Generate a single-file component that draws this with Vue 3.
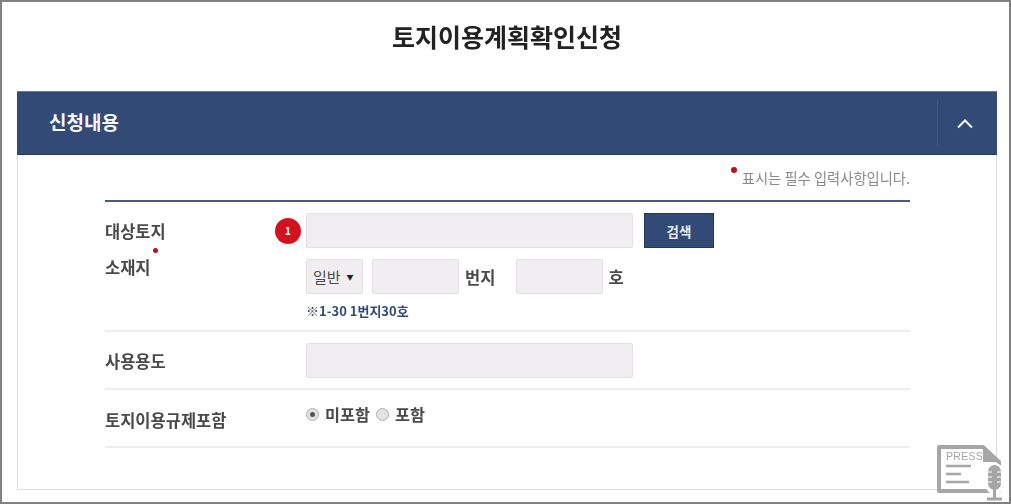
<template>
  <div class="frame">
    <h1 class="page-title">토지이용계획확인신청</h1>

    <section class="panel">
      <header class="panel-head">
        <h2 class="panel-title">신청내용</h2>
        <button class="toggle" type="button" aria-label="접기">
          <svg width="18" height="11" viewBox="0 0 18 11">
            <path d="M2 9.5 L9 2.5 L16 9.5" fill="none" stroke="#f4f6fa" stroke-width="2" />
          </svg>
        </button>
      </header>

      <div class="panel-body">
        <p class="required-note"><span class="dot note-dot"></span>표시는 필수 입력사항입니다.</p>

        <div class="form">
          <div class="row row-land">
            <div class="labels">
              <div class="label">대상토지</div>
              <div class="label label-req">소재지<span class="dot req-dot"></span></div>
            </div>
            <div class="fields">
              <div class="line">
                <span class="badge">1</span>
                <input class="input input-wide" type="text" />
                <button class="search" type="button">검색</button>
              </div>
              <div class="line line-addr">
                <div class="select">일반<span class="caret">▼</span></div>
                <input class="input input-num" type="text" />
                <span class="unit unit-bunji">번지</span>
                <input class="input input-num" type="text" />
                <span class="unit unit-ho">호</span>
              </div>
              <div class="hint">※1-30 1번지30호</div>
            </div>
          </div>

          <div class="row row-use">
            <div class="label">사용용도</div>
            <input class="input input-wide" type="text" />
          </div>

          <div class="row row-rule">
            <div class="label">토지이용규제포함</div>
            <div class="radios">
              <span v-for="opt in options" :key="opt.text" class="radio-item">
                <span class="radio" :class="{ on: opt.checked }"></span>{{ opt.text }}
              </span>
            </div>
          </div>
        </div>
      </div>
    </section>

    <svg class="press" width="68" height="57" viewBox="0 0 68 57">
      <path d="M2 2 H46 L62 17 V46 H2 Z" fill="#fff" stroke="#a6a6a6" stroke-width="4" stroke-linejoin="round" />
      <path d="M46 1 L63 17 H46 Z" fill="#a6a6a6" />
      <text x="9" y="15" class="press-text">PRESS</text>
      <path d="M9 21 H34 M9 29 H24 M9 37 H32" stroke="#a6a6a6" stroke-width="2.5" fill="none" />
      <rect x="49" y="18" width="17" height="31" rx="8" fill="#fff" />
      <rect x="51" y="20" width="13" height="25" rx="6.5" fill="#a6a6a6" />
      <path d="M51 27 H55 M51 32 H55 M51 37 H55 M60 27 H64 M60 32 H64 M60 37 H64" stroke="#fff" stroke-width="1.2" />
      <path d="M57.5 45 V53 M50 54 H65" stroke="#a6a6a6" stroke-width="3" fill="none" />
    </svg>
  </div>
</template>

<script setup>
const options = [
  { text: '미포함', checked: true },
  { text: '포함', checked: false }
]
</script>

<style>
html,
body {
  margin: 0;
  background: #fff;
}
</style>

<style scoped>
.frame {
  position: relative;
  box-sizing: border-box;
  width: 1011px;
  height: 504px;
  border: 2px solid #808080;
  padding: 18px 12px 12px 15px;
  background: #fff;
  overflow: hidden;
  font-family: "Noto Sans CJK KR", "Liberation Sans", sans-serif;
  color: #3c3c3c;
}

.page-title {
  margin: 0 0 38px;
  height: 33px;
  line-height: 33px;
  text-align: center;
  font-size: 25px;
  font-weight: 700;
  color: #222;
  filter: blur(0.5px);
}

.panel {
  height: 399px;
  box-sizing: border-box;
  border: 1px solid #dcdcdc;
  border-top: 0;
  filter: blur(0.5px);
}

.panel-head {
  display: flex;
  align-items: center;
  justify-content: space-between;
  height: 64px;
  margin: 0 -1px;
  background: #324a76;
  border-top: 1px solid #6b7b9c;
  border-bottom: 1px solid #27375a;
  box-sizing: border-box;
}

.panel-title {
  margin: -3px 0 0 32px;
  font-size: 19px;
  font-weight: 700;
  color: #f4f6fa;
}

.toggle {
  display: flex;
  align-items: center;
  justify-content: center;
  width: 60px;
  height: 46px;
  padding: 0 5px 0 0;
  border: 0;
  border-left: 1px solid #3d5582;
  background: none;
}

.panel-body {
  padding: 0 86px 0 87px;
}

.required-note {
  position: relative;
  margin: 0;
  height: 45px;
  line-height: 46px;
  text-align: right;
  font-size: 14.3px;
  color: #8a8a8a;
}

.dot {
  position: absolute;
  width: 6px;
  height: 6px;
  border-radius: 50%;
  background: #b5121b;
}

.note-dot {
  right: 173px;
  top: 12px;
}

.form {
  border-top: 2px solid #4a5a85;
}

.row {
  display: flex;
  border-bottom: 2px solid #eeeef2;
  box-sizing: border-box;
}

.row-land {
  height: 130px;
  padding-top: 11px;
}

.row-use {
  height: 58px;
  padding-top: 11px;
  align-items: flex-start;
}

.row-rule {
  height: 58px;
  padding-top: 13px;
}

.labels {
  width: 201px;
  flex: none;
}

.label {
  position: relative;
  width: 201px;
  flex: none;
  font-size: 16.5px;
  font-weight: 700;
  line-height: 36px;
  color: #4a4a4a;
}

.row-rule .label {
  line-height: 34px;
}

.label-req {
  width: max-content;
}

.req-dot {
  width: 5px;
  height: 5px;
  right: -7px;
  top: -1px;
}

.line {
  position: relative;
  display: flex;
  align-items: center;
}

.badge {
  position: absolute;
  left: -31px;
  top: 5px;
  width: 26px;
  height: 26px;
  border-radius: 50%;
  background: #d3121f;
  color: #fff;
  font-size: 10px;
  font-weight: 700;
  line-height: 26px;
  text-align: center;
}

.input {
  box-sizing: border-box;
  height: 35px;
  border: 1px solid #e4e0e2;
  border-radius: 2px;
  background: #f1eef1;
  padding: 0;
  outline: none;
}

.input-wide {
  width: 327px;
}

.input-num {
  width: 87px;
}

.search {
  width: 70px;
  height: 35px;
  margin-left: 11px;
  padding: 0;
  border: 1px solid #27375a;
  background: #324a76;
  color: #e4e8f0;
  font-family: inherit;
  font-size: 13.5px;
  font-weight: 700;
}

.line-addr {
  margin-top: 11px;
}

.select {
  box-sizing: border-box;
  display: flex;
  align-items: center;
  width: 57px;
  height: 35px;
  margin-right: 9px;
  padding-left: 6px;
  border: 1px solid #e4e0e2;
  border-radius: 2px;
  background: #f1eef1;
  font-size: 15px;
  color: #4a4a4a;
}

.caret {
  margin-left: 6px;
  font-size: 7px;
  color: #222;
}

.unit {
  font-size: 16.5px;
  font-weight: 700;
  color: #4a4a4a;
}

.unit-bunji {
  margin: 0 21px 0 6px;
}

.unit-ho {
  margin-left: 5px;
}

.hint {
  margin-top: 8px;
  font-size: 13px;
  font-weight: 700;
  line-height: 18px;
  color: #324a76;
}

.radios {
  display: flex;
  gap: 6px;
  line-height: 22px;
  font-size: 16.3px;
  font-weight: 700;
  color: #4a4a4a;
}

.radio-item {
  display: flex;
  align-items: center;
  height: 22px;
}

.radio {
  box-sizing: border-box;
  position: relative;
  width: 13px;
  height: 13px;
  margin-right: 6px;
  border: 1px solid #b0b0b0;
  border-radius: 50%;
  background: #e2e2e2;
}

.radio.on::after {
  content: "";
  position: absolute;
  left: 3px;
  top: 3px;
  width: 5px;
  height: 5px;
  border-radius: 50%;
  background: #555;
}

.press {
  position: absolute;
  right: 4px;
  bottom: 0;
  filter: blur(0.5px);
}

.press-text {
  font-family: "Liberation Sans", sans-serif;
  font-size: 10.5px;
  letter-spacing: 0.3px;
  fill: #a6a6a6;
}
</style>
